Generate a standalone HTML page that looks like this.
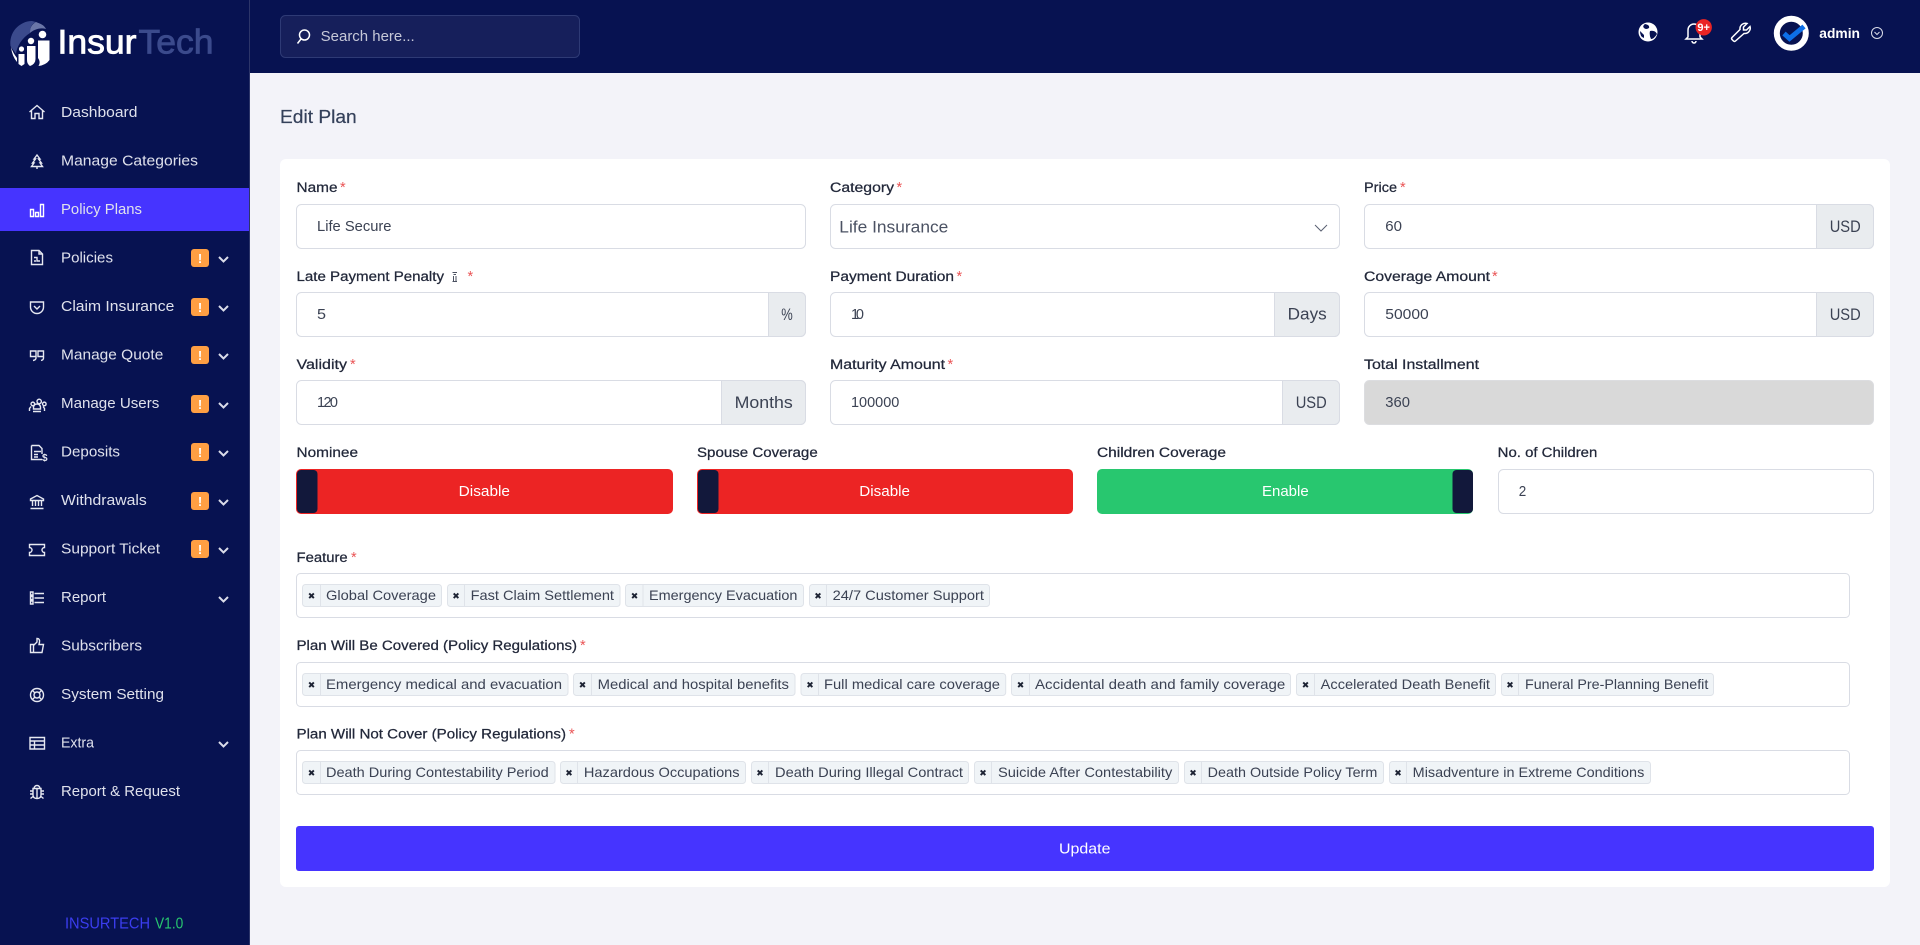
<!DOCTYPE html>
<html lang="en"><head><meta charset="utf-8"><title>Edit Plan</title>
<style>
html,body{margin:0;padding:0;width:1920px;height:945px;overflow:hidden;background:#f3f3f9}
svg{position:absolute;left:0;top:0;display:block}
text{font-family:"Liberation Sans",sans-serif;white-space:pre}
.s{font-size:14.5px;fill:#dfe1ec}
.l{font-size:14.2px;fill:#22283a;stroke:#22283a;stroke-width:.25px}
.v{font-size:14.5px;fill:#3b4253}
.a{font-size:16.5px;fill:#3b4253}
.t{font-size:13.8px;fill:#3b4253}
.x{font-family:"DejaVu Sans",sans-serif;font-size:9px;fill:#1c2233;text-anchor:middle;transform:translateY(-1.5px)}
.r{font-size:14.5px;fill:#ea5455}
.w{font-size:14.5px;fill:#fff}
.f{fill:#fff;stroke:#d9dce4}
.ad{fill:#e9ecef;stroke:#d9dce4}
.tg{fill:#f0f4f7;stroke:#dfe3e9}
.ln{stroke:#dfe3e9}
.i{fill:none;stroke:#e6e8f1;stroke-width:1.4}
.b{fill:#ff9f43}
.bt{font-size:13px;font-weight:bold;fill:#fff;text-anchor:middle}
.c{fill:none;stroke:#dadce9;stroke-width:2}
</style></head><body>
<svg width="1920" height="945" viewBox="0 0 1920 945" xmlns="http://www.w3.org/2000/svg">
<!-- header / sidebar -->
<rect x="250" y="0" width="1670" height="73" fill="#071251"/>
<rect x="0" y="0" width="250" height="945" fill="#071251"/>
<rect x="249" y="0" width="1" height="945" fill="#2c3569"/>
<rect x="0" y="188" width="249" height="43" fill="#4634ff"/>

<!-- logo -->
<path d="M32 21A22 22 0 0 0 10.5 46C13 50 15 52 16 54C17 46 22 38 30 33C30 28 31 24 36 22Z" fill="#3b4a8c"/>
<path d="M36 22C41 24 44 25 46 29C40 27 33 30 30 33C30 28 31 25 36 22Z" fill="#6a76a8"/>
<circle cx="42.500" cy="34.500" r="3.800" fill="#fff"/>
<circle cx="31" cy="41" r="3.200" fill="#fff"/>
<circle cx="21.500" cy="49" r="2.600" fill="#fff"/>
<path d="M38 40.500H49.500V60Q46 65 38.500 66Q41 62 38 58Z" fill="#fff"/>
<path d="M27 46H35.500V59Q35.500 64 30 66Q27 64 27 60Z" fill="#fff"/>
<path d="M18.500 54H24.500V64L21.500 66L18.500 64Z" fill="#fff"/>
<path d="M11 47Q12 56 17 62L17 58Q13 53 11 47Z" fill="#fff"/>
<text x="57.500" y="53.500" font-size="34" fill="#fff" stroke="#fff" stroke-width=".8" textLength="79" lengthAdjust="spacingAndGlyphs">Insur</text>
<text x="138.500" y="53.500" font-size="34" fill="#3b4a8c" stroke="#3b4a8c" stroke-width=".8" textLength="75" lengthAdjust="spacingAndGlyphs">Tech</text>

<!-- search -->
<rect x="280.500" y="15.500" width="299" height="42" rx="5" fill="#161f5b" stroke="#2e3a75"/>
<circle cx="304.500" cy="35" r="5" fill="none" stroke="#fff" stroke-width="1.500"/>
<path d="M301 39L297.500 43.500" stroke="#fff" stroke-width="1.500"/>
<text x="320.700" y="41" font-size="14.500" fill="#c6c8d8" textLength="94" lengthAdjust="spacingAndGlyphs">Search here...</text>

<!-- top right -->
<circle cx="1648" cy="32" r="9.500" fill="#fff"/>
<path d="M1645 24Q1650 25 1649 28Q1646 30 1644 28Q1642 26 1645 24ZM1650 31Q1655 30 1657 34Q1654 39 1651 39Q1649 35 1650 31ZM1640 31L1644 35L1644 38Q1640 37 1640 31Z" fill="#071251"/>
<path d="M1688 37V30A6 6 0 0 1 1700 30V37L1702 39H1686ZM1692 41A2 2 0 0 0 1696 41" fill="none" stroke="#fff" stroke-width="1.500"/>
<circle cx="1703.700" cy="27.300" r="8.200" fill="#ea2424"/>
<text x="1703.700" y="31" font-size="11" font-weight="bold" fill="#fff" text-anchor="middle">9+</text>
<path d="M1733.500 41L1732 39.500A1.500 1.500 0 0 1 1732 37.500L1740 29.500A5.500 5.500 0 0 1 1747 23.500L1743.500 27V30H1746.500L1750 26.500A5.500 5.500 0 0 1 1744 33.500L1735.500 41A1.500 1.500 0 0 1 1733.500 41Z" fill="none" stroke="#fff" stroke-width="1.500"/>
<circle cx="1791.300" cy="33.300" r="14.500" fill="none" stroke="#fff" stroke-width="6"/>
<path d="M1784 33.500L1789.500 38.500L1804 26.500" fill="none" stroke="#0d6fe8" stroke-width="5"/>
<text x="1819.300" y="38" font-size="13.500" font-weight="bold" fill="#fff" textLength="40.700" lengthAdjust="spacingAndGlyphs">admin</text>
<circle cx="1877" cy="33" r="5.500" fill="none" stroke="#dadce9"/>
<path d="M1874.500 32L1877 34.500L1879.500 32" fill="none" stroke="#dadce9"/>

<!-- sidebar icons -->
<g class="i">
<path d="M29.500 112L37 105.500L44.500 112M31.500 110.500V118.500H35V113.500H39V118.500H42.500V110.500"/>
<path d="M37 155L34 159H35.500L32.500 163H34L31.500 166.500H42.500L40 163H41.500L38.500 159H40ZM37 166.500V169"/>
<path d="M30.500 209.500H33.500V216.500H30.500ZM35.500 212.500H38.500V216.500H35.500ZM40.500 204.500H43.500V216.500H40.500Z" stroke="#fff"/>
<path d="M31.500 250.500H39L42.500 254V264.500H31.500ZM39 250.500V254H42.500M34 257.500H37V261H40M34 261H36"/>
<path d="M30.500 302H43.500V307A6.500 6.500 0 0 1 30.500 307ZM34 306L37 309L40 306"/>
<path d="M30.500 351H36V356.500H30.500ZM36 356.500V358Q36 360 33 360.500M38 351H43.500V356.500H38ZM43.500 356.500V358Q43.500 360 41 360.500"/>
<path d="M37 401.500A2.200 2.200 0 1 0 37 401.400ZM33.500 409V407Q34 404 37 404Q40 404 40.500 407V409ZM31 404A1.800 1.800 0 1 0 31 403.900ZM42.500 404A1.800 1.800 0 1 0 42.500 403.900ZM29.500 411V408.500L31 406.500M44.500 411V408.500L43 406.500M33 411.500H41"/>
<path d="M31.500 445.500H39L42 448.500V454M42 459.500H31.500V445.500M34 451.500H41M34 454.500H38M34 457H38"/>
<path d="M30.500 499L37 495.500L43.500 499V500.500H30.500ZM32.500 501V506M35.500 501V506M38.500 501V506M41.500 501V506M30.500 508.500H43.500"/>
<path d="M29.500 544.500H44.500V547.500A2.500 2.500 0 0 0 44.500 552.500V555.500H29.500V552.500A2.500 2.500 0 0 0 29.500 547.500Z"/>
<path d="M34.500 593.500H44M34.500 598H44M34.500 602.500H44M30.500 592H33V595H30.500ZM30.500 596.500H33V599.500H30.500ZM30.500 601H33V604H30.500Z"/>
<path d="M30.500 644.500H33.500V652.500H30.500ZM33.500 645.500L37 642V638.500Q40 638.500 39.500 642L39 644.500H43.500L42 652.500H33.500"/>
<circle cx="37" cy="695" r="6.500"/><circle cx="37" cy="695" r="3"/>
<path d="M32.500 690.500L35 693M41.500 690.500L39 693M32.500 699.500L35 697M41.500 699.500L39 697"/>
<path d="M30 737.500H44.500V749H30ZM30 741H44.500M30 745H44.500M34.500 741V749"/>
<path d="M33 788.500H41V795Q41 798.500 37 798.500Q33 798.500 33 795ZM34 788.500A3 3 0 0 1 40 788.500M37 789V798.500M33 791H30M41 791H44M33 794H30M41 794H44M33 796.500L30.500 798.500M41 796.500L43.500 798.500"/>
</g>
<text x="42" y="461" font-size="10" font-weight="bold" fill="#e6e8f1">$</text>

<!-- sidebar text -->
<g class="s">
<text x="61" y="117" textLength="76.400" lengthAdjust="spacingAndGlyphs">Dashboard</text>
<text x="61" y="165.500" textLength="137" lengthAdjust="spacingAndGlyphs">Manage Categories</text>
<text x="61" y="214" textLength="81" lengthAdjust="spacingAndGlyphs">Policy Plans</text>
<text x="61" y="262.500" textLength="52" lengthAdjust="spacingAndGlyphs">Policies</text>
<text x="61" y="311" textLength="113.300" lengthAdjust="spacingAndGlyphs">Claim Insurance</text>
<text x="61" y="359.500" textLength="102.300" lengthAdjust="spacingAndGlyphs">Manage Quote</text>
<text x="61" y="408" textLength="98.300" lengthAdjust="spacingAndGlyphs">Manage Users</text>
<text x="61" y="456.500" textLength="59" lengthAdjust="spacingAndGlyphs">Deposits</text>
<text x="61" y="505" textLength="85.700" lengthAdjust="spacingAndGlyphs">Withdrawals</text>
<text x="61" y="553.500" textLength="99" lengthAdjust="spacingAndGlyphs">Support Ticket</text>
<text x="61" y="602" textLength="45" lengthAdjust="spacingAndGlyphs">Report</text>
<text x="61" y="650.500" textLength="81" lengthAdjust="spacingAndGlyphs">Subscribers</text>
<text x="61" y="699" textLength="103" lengthAdjust="spacingAndGlyphs">System Setting</text>
<text x="61" y="747.500" textLength="33" lengthAdjust="spacingAndGlyphs">Extra</text>
<text x="61" y="796" textLength="119" lengthAdjust="spacingAndGlyphs">Report &amp; Request</text>
</g>

<!-- badges -->
<g>
<rect class="b" x="191" y="249" width="18" height="18" rx="3"/><text class="bt" x="200" y="263">!</text>
<rect class="b" x="191" y="298" width="18" height="18" rx="3"/><text class="bt" x="200" y="312">!</text>
<rect class="b" x="191" y="346" width="18" height="18" rx="3"/><text class="bt" x="200" y="360">!</text>
<rect class="b" x="191" y="395" width="18" height="18" rx="3"/><text class="bt" x="200" y="409">!</text>
<rect class="b" x="191" y="443" width="18" height="18" rx="3"/><text class="bt" x="200" y="457">!</text>
<rect class="b" x="191" y="492" width="18" height="18" rx="3"/><text class="bt" x="200" y="506">!</text>
<rect class="b" x="191" y="540" width="18" height="18" rx="3"/><text class="bt" x="200" y="554">!</text>
</g>
<g class="c">
<path d="M219 257L223.500 261.500L228 257"/>
<path d="M219 306L223.500 310.500L228 306"/>
<path d="M219 354L223.500 358.500L228 354"/>
<path d="M219 403L223.500 407.500L228 403"/>
<path d="M219 451L223.500 455.500L228 451"/>
<path d="M219 500L223.500 504.500L228 500"/>
<path d="M219 548L223.500 552.500L228 548"/>
<path d="M219 597L223.500 601.500L228 597"/>
<path d="M219 742L223.500 746.500L228 742"/>
</g>
<text x="65" y="928.500" font-size="16" fill="#3b3df0" textLength="85" lengthAdjust="spacingAndGlyphs">INSURTECH</text>
<text x="155" y="928.500" font-size="16" fill="#28c76f" textLength="28.300" lengthAdjust="spacingAndGlyphs">V1.0</text>

<!-- page title + card -->
<text x="280" y="123" font-size="18.5" fill="#34405a" stroke="#34405a" stroke-width=".2" textLength="76.700" lengthAdjust="spacingAndGlyphs">Edit Plan</text>
<rect x="280" y="159" width="1610" height="728" rx="6" fill="#fff"/>

<!-- labels -->
<g class="l">
<text x="296.500" y="192" textLength="41" lengthAdjust="spacingAndGlyphs">Name</text>
<text x="830" y="192" textLength="64" lengthAdjust="spacingAndGlyphs">Category</text>
<text x="1364" y="192" textLength="33" lengthAdjust="spacingAndGlyphs">Price</text>
<text x="296.500" y="281" textLength="147.500" lengthAdjust="spacingAndGlyphs">Late Payment Penalty</text>
<text x="830" y="281" textLength="124" lengthAdjust="spacingAndGlyphs">Payment Duration</text>
<text x="1364" y="281" textLength="126" lengthAdjust="spacingAndGlyphs">Coverage Amount</text>
<text x="296.500" y="369" textLength="50.500" lengthAdjust="spacingAndGlyphs">Validity</text>
<text x="830" y="369" textLength="115" lengthAdjust="spacingAndGlyphs">Maturity Amount</text>
<text x="1364" y="369" textLength="115" lengthAdjust="spacingAndGlyphs">Total Installment</text>
<text x="296.500" y="457" textLength="61.500" lengthAdjust="spacingAndGlyphs">Nominee</text>
<text x="697" y="457" textLength="120.700" lengthAdjust="spacingAndGlyphs">Spouse Coverage</text>
<text x="1097" y="457" textLength="129" lengthAdjust="spacingAndGlyphs">Children Coverage</text>
<text x="1497.700" y="457" textLength="99.600" lengthAdjust="spacingAndGlyphs">No. of Children</text>
<text x="296.500" y="562" textLength="51.200" lengthAdjust="spacingAndGlyphs">Feature</text>
<text x="296.500" y="650" textLength="280.500" lengthAdjust="spacingAndGlyphs">Plan Will Be Covered (Policy Regulations)</text>
<text x="296.500" y="738.500" textLength="269.500" lengthAdjust="spacingAndGlyphs">Plan Will Not Cover (Policy Regulations)</text>
</g>
<g class="r">
<text x="340" y="192">*</text><text x="896.500" y="192">*</text><text x="1400" y="192">*</text>
<text x="467.500" y="281">*</text><text x="956.500" y="281">*</text><text x="1492" y="281">*</text>
<text x="350" y="369">*</text><text x="947.500" y="369">*</text>
<text x="351" y="562">*</text><text x="580" y="650">*</text><text x="569" y="738.500">*</text>
</g>
<path d="M452.500 272.500H457M453.500 274.500H456M453.500 276V281M456 276V281M452.500 281.500H457" fill="none" stroke="#4a5060" stroke-width="1"/>

<!-- row 1 -->
<rect class="f" x="296.500" y="204.500" width="509" height="44" rx="5"/>
<text class="v" x="317" y="231" textLength="74.500" lengthAdjust="spacingAndGlyphs">Life Secure</text>
<rect class="f" x="830.500" y="204.500" width="509" height="44" rx="5"/>
<text x="839.300" y="232.500" font-size="16.500" fill="#4b5263" textLength="109" lengthAdjust="spacingAndGlyphs">Life Insurance</text>
<path d="M1315 225L1321 231L1327 225" fill="none" stroke="#5a6072"/>
<rect class="f" x="1364.500" y="204.500" width="509" height="44" rx="5"/>
<path class="ad" d="M1816.500 204.500H1868.500a5 5 0 0 1 5 5V243.500a5 5 0 0 1 -5 5H1816.500Z"/>
<text class="v" x="1385.300" y="231" textLength="16.700" lengthAdjust="spacingAndGlyphs">60</text>
<text class="a" x="1829.700" y="232" textLength="31" lengthAdjust="spacingAndGlyphs">USD</text>

<!-- row 2 -->
<rect class="f" x="296.500" y="292.500" width="509" height="44" rx="5"/>
<path class="ad" d="M768.500 292.500H800.500a5 5 0 0 1 5 5V331.500a5 5 0 0 1 -5 5H768.500Z"/>
<text class="v" x="317" y="319" textLength="9" lengthAdjust="spacingAndGlyphs">5</text>
<text class="a" x="781.300" y="320" textLength="11.500" lengthAdjust="spacingAndGlyphs">%</text>
<rect class="f" x="830.500" y="292.500" width="509" height="44" rx="5"/>
<path class="ad" d="M1274.500 292.500H1334.500a5 5 0 0 1 5 5V331.500a5 5 0 0 1 -5 5H1274.500Z"/>
<text class="v" x="851" y="319" textLength="13" lengthAdjust="spacing">10</text>
<text class="a" x="1287.700" y="319.500" textLength="39" lengthAdjust="spacingAndGlyphs">Days</text>
<rect class="f" x="1364.500" y="292.500" width="509" height="44" rx="5"/>
<path class="ad" d="M1816.500 292.500H1868.500a5 5 0 0 1 5 5V331.500a5 5 0 0 1 -5 5H1816.500Z"/>
<text class="v" x="1385.300" y="319" textLength="43.400" lengthAdjust="spacingAndGlyphs">50000</text>
<text class="a" x="1829.700" y="320" textLength="31" lengthAdjust="spacingAndGlyphs">USD</text>

<!-- row 3 -->
<rect class="f" x="296.500" y="380.500" width="509" height="44" rx="5"/>
<path class="ad" d="M721.500 380.500H800.500a5 5 0 0 1 5 5V419.500a5 5 0 0 1 -5 5H721.500Z"/>
<text class="v" x="317" y="407" textLength="21" lengthAdjust="spacing">120</text>
<text class="a" x="734.600" y="408" textLength="58.200" lengthAdjust="spacingAndGlyphs">Months</text>
<rect class="f" x="830.500" y="380.500" width="509" height="44" rx="5"/>
<path class="ad" d="M1282.500 380.500H1334.500a5 5 0 0 1 5 5V419.500a5 5 0 0 1 -5 5H1282.500Z"/>
<text class="v" x="851" y="407" textLength="48.300" lengthAdjust="spacingAndGlyphs">100000</text>
<text class="a" x="1295.700" y="408" textLength="31" lengthAdjust="spacingAndGlyphs">USD</text>
<rect x="1364.500" y="380.500" width="509" height="44" rx="5" fill="#d9d9d9" stroke="#dcdde0"/>
<text class="v" x="1385.300" y="407" textLength="24.700" lengthAdjust="spacingAndGlyphs">360</text>

<!-- toggles -->
<rect x="296" y="469" width="377" height="45" rx="5" fill="#ec2424"/>
<rect x="297" y="470" width="20.500" height="43" rx="4" fill="#12183b"/>
<text class="w" x="458.700" y="496" textLength="51.300" lengthAdjust="spacingAndGlyphs">Disable</text>
<rect x="697" y="469" width="376" height="45" rx="5" fill="#ec2424"/>
<rect x="698" y="470" width="20.500" height="43" rx="4" fill="#12183b"/>
<text class="w" x="859.300" y="496" textLength="50.700" lengthAdjust="spacingAndGlyphs">Disable</text>
<rect x="1097" y="469" width="376" height="45" rx="5" fill="#28c76f"/>
<rect x="1452.500" y="470" width="20.500" height="43" rx="4" fill="#12183b"/>
<text class="w" x="1262" y="496" textLength="46.700" lengthAdjust="spacingAndGlyphs">Enable</text>
<rect class="f" x="1498.500" y="469.500" width="375" height="44" rx="5"/>
<text class="v" x="1518.700" y="496" textLength="7.500" lengthAdjust="spacingAndGlyphs">2</text>

<!-- tag boxes -->
<rect class="f" x="296.500" y="573.500" width="1553" height="44" rx="4"/>
<rect class="f" x="296.500" y="662.500" width="1553" height="44" rx="4"/>
<rect class="f" x="296.500" y="750.500" width="1553" height="44" rx="4"/>

<!-- Feature tags -->
<rect class="tg" x="302.500" y="584.500" width="139" height="22" rx="3"/><path class="ln" d="M320.500 585V606"/><text class="x" x="311.500" y="600.500">✖</text><text class="t" x="326" y="600" textLength="110" lengthAdjust="spacingAndGlyphs">Global Coverage</text>
<rect class="tg" x="447.500" y="584.500" width="172.500" height="22" rx="3"/><path class="ln" d="M464.500 585V606"/><text class="x" x="456" y="600.500">✖</text><text class="t" x="470.600" y="600" textLength="143.400" lengthAdjust="spacingAndGlyphs">Fast Claim Settlement</text>
<rect class="tg" x="625.500" y="584.500" width="178" height="22" rx="3"/><path class="ln" d="M643 585V606"/><text class="x" x="634.500" y="600.500">✖</text><text class="t" x="649" y="600" textLength="148.400" lengthAdjust="spacingAndGlyphs">Emergency Evacuation</text>
<rect class="tg" x="809.500" y="584.500" width="180" height="22" rx="3"/><path class="ln" d="M826.500 585V606"/><text class="x" x="818" y="600.500">✖</text><text class="t" x="832.600" y="600" textLength="151.400" lengthAdjust="spacingAndGlyphs">24/7 Customer Support</text>

<!-- Covered tags -->
<rect class="tg" x="302.500" y="673.500" width="265.500" height="22" rx="3"/><path class="ln" d="M320.500 674V695"/><text class="x" x="311.500" y="689.500">✖</text><text class="t" x="326" y="689" textLength="236" lengthAdjust="spacingAndGlyphs">Emergency medical and evacuation</text>
<rect class="tg" x="573.500" y="673.500" width="221.500" height="22" rx="3"/><path class="ln" d="M591.500 674V695"/><text class="x" x="582.500" y="689.500">✖</text><text class="t" x="597.600" y="689" textLength="191.400" lengthAdjust="spacingAndGlyphs">Medical and hospital benefits</text>
<rect class="tg" x="801" y="673.500" width="204.700" height="22" rx="3"/><path class="ln" d="M818.500 674V695"/><text class="x" x="810" y="689.500">✖</text><text class="t" x="824" y="689" textLength="176" lengthAdjust="spacingAndGlyphs">Full medical care coverage</text>
<rect class="tg" x="1011.500" y="673.500" width="279" height="22" rx="3"/><path class="ln" d="M1029.500 674V695"/><text class="x" x="1020.500" y="689.500">✖</text><text class="t" x="1035" y="689" textLength="250.300" lengthAdjust="spacingAndGlyphs">Accidental death and family coverage</text>
<rect class="tg" x="1296.500" y="673.500" width="199" height="22" rx="3"/><path class="ln" d="M1314.500 674V695"/><text class="x" x="1305.500" y="689.500">✖</text><text class="t" x="1320.700" y="689" textLength="169.300" lengthAdjust="spacingAndGlyphs">Accelerated Death Benefit</text>
<rect class="tg" x="1501.500" y="673.500" width="212" height="22" rx="3"/><path class="ln" d="M1518.500 674V695"/><text class="x" x="1510" y="689.500">✖</text><text class="t" x="1525" y="689" textLength="183.300" lengthAdjust="spacingAndGlyphs">Funeral Pre-Planning Benefit</text>

<!-- Not covered tags -->
<rect class="tg" x="302.500" y="761.500" width="252.500" height="22" rx="3"/><path class="ln" d="M320.500 762V783"/><text class="x" x="311.500" y="777.500">✖</text><text class="t" x="326" y="777" textLength="222.700" lengthAdjust="spacingAndGlyphs">Death During Contestability Period</text>
<rect class="tg" x="560.500" y="761.500" width="185" height="22" rx="3"/><path class="ln" d="M577.500 762V783"/><text class="x" x="569" y="777.500">✖</text><text class="t" x="583.900" y="777" textLength="155.700" lengthAdjust="spacingAndGlyphs">Hazardous Occupations</text>
<rect class="tg" x="751.500" y="761.500" width="217" height="22" rx="3"/><path class="ln" d="M768.500 762V783"/><text class="x" x="760" y="777.500">✖</text><text class="t" x="775" y="777" textLength="188" lengthAdjust="spacingAndGlyphs">Death During Illegal Contract</text>
<rect class="tg" x="974.500" y="761.500" width="204" height="22" rx="3"/><path class="ln" d="M991.500 762V783"/><text class="x" x="983" y="777.500">✖</text><text class="t" x="998" y="777" textLength="174.300" lengthAdjust="spacingAndGlyphs">Suicide After Contestability</text>
<rect class="tg" x="1184.500" y="761.500" width="199" height="22" rx="3"/><path class="ln" d="M1201.500 762V783"/><text class="x" x="1193" y="777.500">✖</text><text class="t" x="1207.700" y="777" textLength="169.600" lengthAdjust="spacingAndGlyphs">Death Outside Policy Term</text>
<rect class="tg" x="1389.500" y="761.500" width="261" height="22" rx="3"/><path class="ln" d="M1406.500 762V783"/><text class="x" x="1398" y="777.500">✖</text><text class="t" x="1412.700" y="777" textLength="231.600" lengthAdjust="spacingAndGlyphs">Misadventure in Extreme Conditions</text>

<!-- submit -->
<rect x="296" y="826" width="1578" height="45" rx="3" fill="#4634ff"/>
<text class="w" x="1059" y="853.500" textLength="51.500" lengthAdjust="spacingAndGlyphs">Update</text>
</svg>
</body></html>
